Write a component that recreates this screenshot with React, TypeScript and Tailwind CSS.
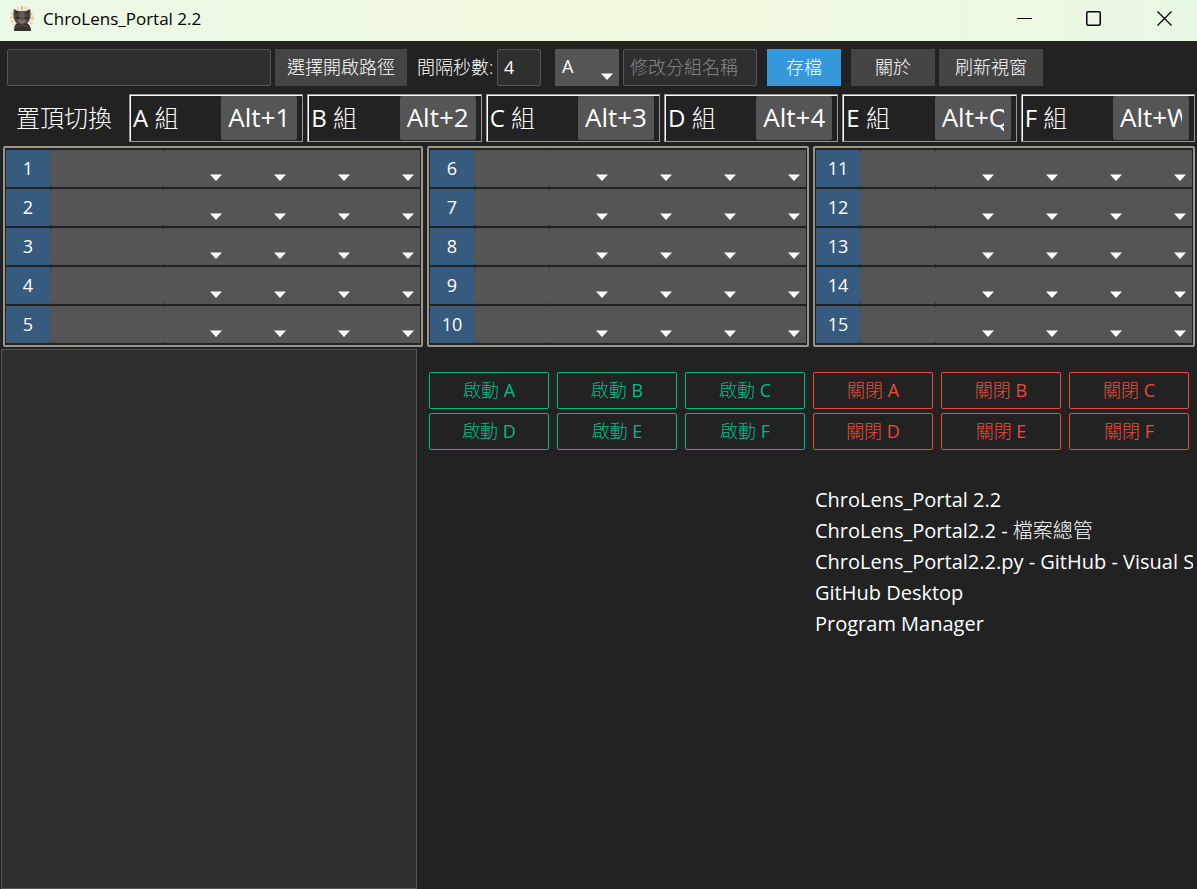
import React from "react";

const sans = "font-['Open_Sans','Noto_Sans_CJK_TC',sans-serif]";
const groups = [
  { name: "A", hotkey: "Alt+1" },
  { name: "B", hotkey: "Alt+2" },
  { name: "C", hotkey: "Alt+3" },
  { name: "D", hotkey: "Alt+4" },
  { name: "E", hotkey: "Alt+Q" },
  { name: "F", hotkey: "Alt+W" },
];
const panels = [
  [1, 2, 3, 4, 5],
  [6, 7, 8, 9, 10],
  [11, 12, 13, 14, 15],
];
const windows = [
  { title: "ChroLens_Portal 2.2" },
  { title: "ChroLens_Portal2.2 - ", suffix: "檔案總管" },
  { title: "ChroLens_Portal2.2.py - GitHub - Visual Studio Code" },
  { title: "GitHub Desktop" },
  { title: "Program Manager" },
];

function CatIcon() {
  return (
    <svg width="26" height="26" viewBox="0 0 26 26" aria-hidden="true">
      <circle cx="13" cy="12" r="10.5" fill="none" stroke="#e9cfa4" strokeWidth="2.6" strokeDasharray="2.4 1.6" />
      <circle cx="13" cy="12" r="9" fill="#efe6cf" />
      <path d="M12 0h2v4h-2z" fill="#e2bd8c" />
      <path d="M5 25c0-4 1-6 3-8h10c3 2 4 5 4 8z" fill="#37322d" />
      <path d="M5 3l4 2h8l4-2c1 5 1 9-1 12-2 3-5 3-7 3s-6 0-7-3C4 12 4 7 5 3z" fill="#4c4743" />
      <path d="M6 5l3 1-2 3zM20 5l-3 1 2 3z" fill="#2b2825" />
      <path d="M11 5h4l1 7h-6z" fill="#625a54" />
      <path d="M7 11.500l4 1M15.500 12.500l4-1" stroke="#1b1817" strokeWidth="1.2" />
      <path d="M10 13h6l1 3-4 2-4-2z" fill="#7d7168" />
      <path d="M12 13.500h2l-1 1.500z" fill="#1b1716" />
      <path d="M8 21l5-2 6 2" stroke="#574b42" strokeWidth="1.3" fill="none" />
    </svg>
  );
}

function TitleBar() {
  return (
    <header className="flex h-[41px] items-center bg-linear-to-r from-[#eaf8e6] via-[#eff8dd] to-[#e9f8e4] text-black">
      <div className="flex flex-1 items-center gap-2 pb-1 pl-[9px]">
        <CatIcon />
        <h1 className="text-[17px] leading-6">ChroLens_Portal 2.2</h1>
      </div>
      <div className="flex pb-1">
        <button aria-label="最小化" className="flex h-8 w-[70px] items-center justify-center">
          <svg width="15" height="15" viewBox="0 0 15 15"><path d="M0 7.5h15" stroke="#000" /></svg>
        </button>
        <button aria-label="最大化" className="flex h-8 w-[69px] items-center justify-center">
          <svg width="15" height="15" viewBox="0 0 15 15"><rect x=".75" y=".75" width="13.5" height="13.5" rx="1.5" fill="none" stroke="#000" strokeWidth="1.5" /></svg>
        </button>
        <button aria-label="關閉" className="flex h-8 w-[69px] items-center justify-center pl-[3px]">
          <svg width="15" height="15" viewBox="0 0 15 15"><path d="M.5.5l14 14M14.5.5l-14 14" stroke="#000" strokeWidth="1.3" /></svg>
        </button>
      </div>
    </header>
  );
}

function Dropdown({ label, options }: { label: string; options: string[] }) {
  return (
    <div className="relative h-[37px] w-16 shrink-0">
      <select aria-label={label} className="h-full w-full appearance-none bg-[#555] pb-[2px] pl-[7px] text-[18px] text-white outline-none">
        {options.map((o) => (
          <option key={o}>{o}</option>
        ))}
      </select>
      <svg className="pointer-events-none absolute right-[6px] bottom-[6px]" width="12" height="7" viewBox="0 0 12 7">
        <path d="M0 .5h12L6 7z" fill="#fff" />
      </svg>
    </div>
  );
}

const field = "h-[37px] rounded-[2px] border border-[#555] bg-[#2f2f2f] px-[6px] pb-[2px] text-[18px] text-white outline-none placeholder:font-light placeholder:text-[#888]";
const grey = "h-[37px] shrink-0 bg-[#444] pb-[2px] text-[18px] leading-6 font-light text-white";

function Toolbar() {
  return (
    <div className="flex items-center pt-2 pl-[7px]">
      <input aria-label="開啟路徑" className={`${field} w-[264px]`} />
      <button className={`${grey} ml-1 w-[132px]`}>選擇開啟路徑</button>
      <label htmlFor="interval" className="mr-1 ml-[10px] w-[76px] shrink-0 pb-[2px] text-[18px] leading-6 font-light whitespace-nowrap text-white">
        間隔秒數:
      </label>
      <input id="interval" defaultValue="4" className={`${field} mr-[14px] w-11`} />
      <Dropdown label="分組" options={["A", "B", "C", "D", "E", "F"]} />
      <input aria-label="修改分組名稱" placeholder="修改分組名稱" className={`${field} placeholder:font-light ml-1 w-[134px]`} />
      <button className="ml-[10px] h-[37px] w-[74px] shrink-0 bg-[#3498db] pb-[2px] text-[18px] leading-6 font-light text-white">存檔</button>
      <button className={`${grey} ml-[10px] w-[84px]`}>關於</button>
      <button className={`${grey} ml-1 w-[104px]`}>刷新視窗</button>
    </div>
  );
}

function GroupBar() {
  return (
    <div className="flex items-center pt-2 pr-[2px] pl-4 text-white">
      <span className="w-[113px] shrink-0 text-[24px] leading-8 font-light">置頂切換</span>
      <div className="grid flex-1 grid-cols-6 gap-1">
        {groups.map((g) => (
          <div key={g.name} className="border border-[#9f978c]">
            <div className="flex h-[46px] items-start justify-between border-t border-l border-white pr-[5px]">
              <label htmlFor={`hotkey-${g.name}`} className="pt-[6px] pl-[2px] text-[24px] leading-8">
                {g.name} <span className="font-light">組</span>
              </label>
              <input
                id={`hotkey-${g.name}`}
                defaultValue={g.hotkey}
                className="h-11 w-[76px] rounded-[2px] bg-[#555] px-[7px] pb-[2px] text-[26px] outline-none"
              />
            </div>
          </div>
        ))}
      </div>
    </div>
  );
}

function SlotPanel({ slots }: { slots: number[] }) {
  return (
    <section className="flex flex-col gap-[2px] rounded-[2px] border-2 border-[#9b968b] px-px py-[2px]">
      {slots.map((n) => (
        <div key={n} className="flex h-[37px]">
          <label htmlFor={`slot-${n}`} className="w-11 shrink-0 bg-[#375a7f] pt-[6px] text-center text-[18px] leading-6 text-white">
            {n}
          </label>
          <input id={`slot-${n}`} className="w-0 min-w-0 flex-1 rounded-[2px] bg-[#555] px-1 text-[18px] text-white outline-none" />
          {[1, 2, 3, 4].map((k) => (
            <Dropdown key={k} label={`${n}-${k}`} options={["", "A", "B", "C", "D", "E", "F"]} />
          ))}
        </div>
      ))}
    </section>
  );
}

const outline = "h-[37px] rounded-[2px] border pb-[2px] text-[18px] leading-6";

function ActionButtons() {
  const rows = [["A", "B", "C"], ["D", "E", "F"]];
  return (
    <div className="grid grid-cols-6 gap-x-2 gap-y-1 pt-[23px] pr-2 pl-3">
      {rows.map((row) => (
        <React.Fragment key={row[0]}>
          {row.map((g) => (
            <button key={`s${g}`} className={`${outline} border-[#00bc8c] text-[#00bc8c]`}>
              <span className="font-light">啟動</span> {g}
            </button>
          ))}
          {row.map((g) => (
            <button key={`c${g}`} className={`${outline} border-[#e74c3c] text-[#e74c3c]`}>
              <span className="font-light">關閉</span> {g}
            </button>
          ))}
        </React.Fragment>
      ))}
    </div>
  );
}

export default function App() {
  return (
    <div className={`flex min-h-screen flex-col overflow-hidden bg-[#222] ${sans}`}>
      <TitleBar />
      <Toolbar />
      <GroupBar />
      <main className="flex flex-1 flex-col">
        <div className="grid grid-cols-[420fr_382fr_382fr] gap-1 pt-1 pr-[2px] pl-[3px]">
          {panels.map((p) => (
            <SlotPanel key={p[0]} slots={p} />
          ))}
        </div>
        <div className="grid flex-1 grid-cols-[416fr_780fr] pt-[2px] pl-px">
          <textarea aria-label="記錄" className="block h-full w-full resize-none border border-[#555] bg-[#2f2f2f] p-2 text-[18px] text-white outline-none" />
          <div className="min-w-0">
            <ActionButtons />
            <div className="grid grid-cols-2 pt-[34px] pr-1 pl-4">
              <ul className="col-start-2 overflow-hidden pl-[2px] text-[20px] leading-[31px] whitespace-nowrap text-white">
                {windows.map((w) => (
                  <li key={w.title}>
                    {w.title}
                    {w.suffix && <span className="font-light">{w.suffix}</span>}
                  </li>
                ))}
              </ul>
            </div>
          </div>
        </div>
      </main>
    </div>
  );
}
